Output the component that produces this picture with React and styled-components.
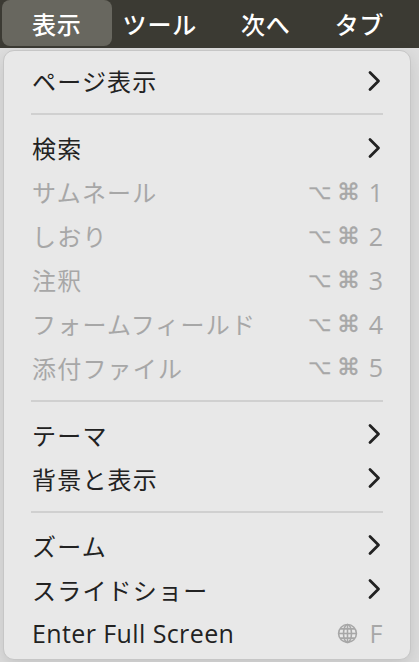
import React from "react";
import styled, { createGlobalStyle } from "styled-components";

const GlobalStyle = createGlobalStyle`
  html, body {
    margin: 0;
    padding: 0;
    background: #dedede;
    font-family: "Open Sans", "Noto Sans CJK JP", sans-serif;
    -webkit-font-smoothing: antialiased;
  }
`;

const Screen = styled.div`
  width: 419px;
  height: 662px;
  overflow: hidden;
  display: flex;
  flex-direction: column;
`;

const MenuBar = styled.div`
  height: 48px;
  background: #3b3a33;
  display: flex;
  align-items: stretch;
  padding: 0 0 0 2px;
  flex-shrink: 0;
`;

const MenuTitle = styled.div`
  display: flex;
  align-items: center;
  padding: 0 ${(p) => (p.$active ? 30 : 22)}px;
  margin: 0 ${(p) => (p.$active ? -11 : 0)}px 2px 0;
  border-radius: 8px;
  background: ${(p) => (p.$active ? "#68675f" : "transparent")};
  color: #ffffff;
  font-family: "Noto Sans CJK JP", sans-serif;
  font-size: 24px;
  font-weight: 500;
  letter-spacing: 0.8px;
`;

const Panel = styled.div`
  margin: 2px 8px 0 3px;
  height: 610px;
  box-sizing: border-box;
  background: #e8e8e8;
  border: 1px solid #c6c6c6;
  border-radius: 11px;
  padding: 8px 0 4px;
  box-shadow: 0 6px 18px rgba(0, 0, 0, 0.12);
  display: flex;
  flex-direction: column;
`;

const Row = styled.div`
  height: 44px;
  display: flex;
  align-items: center;
  justify-content: space-between;
  padding: 0 29px 0 28px;
  color: ${(p) => (p.$disabled ? "#a7a7a7" : "#222222")};
  font-size: ${(p) => (p.$latin ? 25 : 24)}px;
  font-family: ${(p) =>
    p.$latin ? `"Open Sans", sans-serif` : `"Noto Sans CJK JP", sans-serif`};
  letter-spacing: ${(p) => (p.$latin ? "0.4px" : "1.2px")};
`;

const Separator = styled.div`
  height: 23px;
  display: flex;
  align-items: center;
  padding: 0 27px 0 27px;

  &::after {
    content: "";
    flex: 1;
    height: 2px;
    background: #d0d0d0;
  }
`;

const Shortcut = styled.div`
  display: flex;
  align-items: center;
  gap: ${(p) => p.$gap || 6}px;
  margin-right: -3px;
  color: #a7a7a7;
  letter-spacing: 0;
`;

const Symbol = styled.span`
  font-family: "DejaVu Sans", sans-serif;
  font-size: ${(p) => p.$size || 21}px;
  -webkit-text-stroke: 0.4px #a7a7a7;
`;

const KeyChar = styled.span`
  display: inline-block;
  width: 16px;
  margin-left: 2px;
  text-align: center;
  font-family: "Open Sans", sans-serif;
  font-size: 25px;
`;

const Chevron = () => (
  <svg width="14" height="22" viewBox="0 0 14 22">
    <polyline
      points="3,2.5 11.5,11 3,19.5"
      fill="none"
      stroke="#222"
      strokeWidth="2.8"
      strokeLinecap="round"
      strokeLinejoin="round"
    />
  </svg>
);

const Globe = () => (
  <svg width="21" height="21" viewBox="0 0 20 20">
    <g fill="none" stroke="#a7a7a7" strokeWidth="1.5">
      <circle cx="10" cy="10" r="8.5" />
      <ellipse cx="10" cy="10" rx="3.8" ry="8.5" />
      <line x1="10" y1="1.5" x2="10" y2="18.5" />
      <line x1="1.5" y1="10" x2="18.5" y2="10" />
      <path d="M3 5.6 H17 M3 14.4 H17" />
    </g>
  </svg>
);

const menus = ["表示", "ツール", "次へ", "タブ"];

const items = [
  { label: "ページ表示", sub: true },
  { sep: true },
  { label: "検索", sub: true },
  { label: "サムネール", disabled: true, key: "1" },
  { label: "しおり", disabled: true, key: "2" },
  { label: "注釈", disabled: true, key: "3" },
  { label: "フォームフィールド", disabled: true, key: "4" },
  { label: "添付ファイル", disabled: true, key: "5" },
  { sep: true },
  { label: "テーマ", sub: true },
  { label: "背景と表示", sub: true },
  { sep: true },
  { label: "ズーム", sub: true },
  { label: "スライドショー", sub: true },
  { label: "Enter Full Screen", latin: true, globe: "F" },
];

const App = () => {
  return (
    <Screen>
      <GlobalStyle />
      <MenuBar>
        {menus.map((m, i) => (
          <MenuTitle key={m} $active={i === 0}>
            {m}
          </MenuTitle>
        ))}
      </MenuBar>
      <Panel>
        {items.map((it, i) => {
          if (it.sep) return <Separator key={i} />;
          return (
            <Row key={i} $disabled={it.disabled} $latin={it.latin}>
              <span>{it.label}</span>
              {it.sub && <Chevron />}
              {it.key && (
                <Shortcut>
                  <Symbol $size={20}>⌥</Symbol>
                  <Symbol $size={23}>⌘</Symbol>
                  <KeyChar>{it.key}</KeyChar>
                </Shortcut>
              )}
              {it.globe && (
                <Shortcut $gap={8}>
                  <Globe />
                  <KeyChar>{it.globe}</KeyChar>
                </Shortcut>
              )}
            </Row>
          );
        })}
      </Panel>
    </Screen>
  );
};

export default App;
